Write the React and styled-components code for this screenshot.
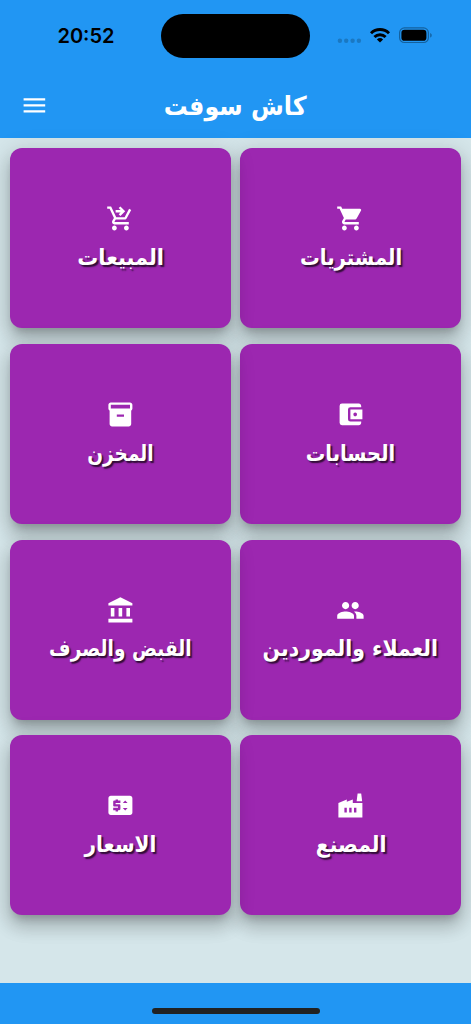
import React from "react";
import styled, { createGlobalStyle } from "styled-components";
import {
  MdMenu,
  MdShoppingCart,
  MdShoppingCartCheckout,
  MdInventory2,
  MdAccountBalanceWallet,
  MdAccountBalance,
  MdPeople,
  MdPriceChange,
  MdFactory,
} from "react-icons/md";

const GlobalStyle = createGlobalStyle`
  * { box-sizing: border-box; }
  body { margin: 0; background: #d5e6ea; }
`;

const Screen = styled.div`
  display: flex;
  flex-direction: column;
  width: 471px;
  height: 1024px;
  overflow: hidden;
  background: #d5e6ea;
  font-family: "DejaVu Sans", sans-serif;
`;

const Header = styled.header`
  flex: none;
  height: 138.4px;
  background: #2196f3;
`;

const StatusBar = styled.div`
  display: grid;
  grid-template-columns: 161px 149px 161px;
  align-items: center;
  height: 72px;
`;

const Time = styled.div`
  padding-left: 11px;
  text-align: center;
  font: 600 20px/24px Inter, sans-serif;
  color: #000;
`;

const Island = styled.div`
  height: 44px;
  border-radius: 22px;
  background: #000;
`;

const StatusIcons = styled.svg`
  display: block;
  width: 161px;
  height: 72px;
`;

const AppBar = styled.div`
  display: grid;
  grid-template-columns: 68px 1fr 68px;
  align-items: center;
  justify-items: center;
  height: 66px;
  color: #fff;

  svg { display: block; }
`;

const Title = styled.h1`
  margin: 0;
  padding-top: 2px;
  font-size: 26px;
  line-height: 40px;
  font-weight: 700;
  white-space: nowrap;
  transform: scaleX(${(p) => p.$stretch});
`;

const Grid = styled.main`
  flex: 1;
  display: grid;
  grid-template-columns: 1fr 1fr;
  grid-auto-rows: 180px;
  column-gap: 9.5px;
  row-gap: 15.8px;
  padding: 9.6px 9.8px 0;
  direction: rtl;
`;

const Card = styled.section`
  display: flex;
  flex-direction: column;
  align-items: center;
  padding-top: 56px;
  border-radius: 12px;
  background: #9c27b0;
  color: #fff;
  box-shadow:
    0 7px 8px -4px rgba(0, 0, 0, 0.2),
    0 12px 17px 1px rgba(0, 0, 0, 0.14),
    0 5px 22px 4px rgba(0, 0, 0, 0.12);

  svg { flex: none; display: block; }
`;

const Label = styled.span`
  margin-top: 7px;
  font-size: 22px;
  line-height: 36px;
  font-weight: 700;
  white-space: nowrap;
  text-shadow: 2px 2px 1.5px rgba(0, 0, 0, 0.7);
  transform: scaleX(${(p) => p.$stretch});
`;

const Footer = styled.footer`
  flex: none;
  display: flex;
  justify-content: center;
  height: 41.5px;
  padding-top: 25.5px;
  background: #2196f3;
`;

const HomeIndicator = styled.div`
  width: 168px;
  height: 6px;
  border-radius: 3px;
  background: #212121;
`;

const tiles = [
  { label: "المشتريات", icon: MdShoppingCart, stretch: 0.895 },
  { label: "المبيعات", icon: MdShoppingCartCheckout, stretch: 0.95 },
  { label: "الحسابات", icon: MdAccountBalanceWallet, stretch: 0.885 },
  { label: "المخزن", icon: MdInventory2, stretch: 0.84 },
  { label: "العملاء والموردين", icon: MdPeople, stretch: 0.93 },
  { label: "القبض والصرف", icon: MdAccountBalance, stretch: 0.845 },
  { label: "المصنع", icon: MdFactory, stretch: 0.93 },
  { label: "الاسعار", icon: MdPriceChange, stretch: 0.91 },
];

function Indicators() {
  return (
    <StatusIcons viewBox="310 0 161 72">
      <g fill="#1a78c2">
        <circle cx="339.9" cy="40.8" r="2.2" />
        <circle cx="346.2" cy="40.8" r="2.2" />
        <circle cx="352.6" cy="40.8" r="2.2" />
        <circle cx="358.9" cy="40.8" r="2.2" />
      </g>
      <g fill="none" stroke="#000" strokeWidth="2.9">
        <path d="M371 33.2a12.8 12.8 0 0 1 18 0" />
        <path d="M374.4 37.1a7.9 7.9 0 0 1 11.2 0" />
      </g>
      <path d="M380 42.4 376.9 39.4a4.5 4.5 0 0 1 6.2 0Z" fill="#000" />
      <rect x="399.6" y="27.9" width="28.8" height="14.6" rx="4.8" fill="none" stroke="#14619e" strokeWidth="1.2" />
      <rect x="401.4" y="29.8" width="25" height="11" rx="3.1" fill="#000" />
      <path d="M430.2 33v4.6c1-.4 1.5-1.3 1.5-2.3s-.5-1.900-1.500-2.300Z" fill="#14619e" />
    </StatusIcons>
  );
}

export default function App() {
  return (
    <>
      <GlobalStyle />
      <Screen>
        <Header>
          <StatusBar>
            <Time>20:52</Time>
            <Island />
            <Indicators />
          </StatusBar>
          <AppBar>
            <MdMenu size={28.8} />
            <Title $stretch={0.915}>كاش سوفت</Title>
          </AppBar>
        </Header>
        <Grid>
          {tiles.map(({ label, icon: Icon, stretch }) => (
            <Card key={label}>
              <Icon size={28.8} />
              <Label $stretch={stretch}>{label}</Label>
            </Card>
          ))}
        </Grid>
        <Footer>
          <HomeIndicator />
        </Footer>
      </Screen>
    </>
  );
}
